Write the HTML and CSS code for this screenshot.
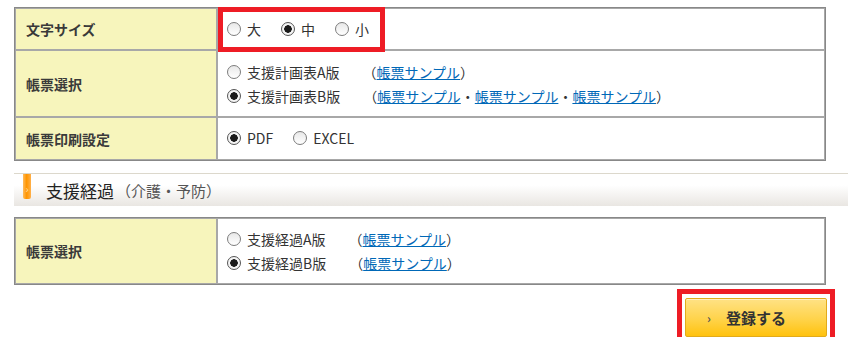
FILE: index.html
```html
<!DOCTYPE html>
<html lang="ja">
<head>
    <meta charset="UTF-8">
    <meta name="viewport" content="width=device-width, initial-scale=1.0">
    <title>帳票設定</title>
    <link rel="stylesheet" href="styles.css">
</head>
<body>
    <div class="page">
        <table class="form-table">
            <tr>
                <th>文字サイズ</th>
                <td class="hl-cell">
                    <div class="line">
                        <span class="opt"><i class="radio"></i>大</span>
                        <span class="opt"><i class="radio on"></i>中</span>
                        <span class="opt"><i class="radio"></i>小</span>
                    </div>
                    <span class="hl-frame"></span>
                </td>
            </tr>
            <tr>
                <th>帳票選択</th>
                <td class="multi">
                    <div class="line">
                        <span class="opt"><i class="radio"></i>支援計画表A版</span>
                        <span class="sample">（<a href="#">帳票サンプル</a>）</span>
                    </div>
                    <div class="line">
                        <span class="opt"><i class="radio on"></i>支援計画表B版</span>
                        <span class="sample">（<a href="#">帳票サンプル</a>・<a href="#">帳票サンプル</a>・<a href="#">帳票サンプル</a>）</span>
                    </div>
                </td>
            </tr>
            <tr>
                <th>帳票印刷設定</th>
                <td class="last">
                    <div class="line">
                        <span class="opt"><i class="radio on"></i>PDF</span>
                        <span class="opt"><i class="radio"></i>EXCEL</span>
                    </div>
                </td>
            </tr>
        </table>

        <div class="section-head">
            <span class="mark">›</span>
            <h2>支援経過</h2>
            <span class="sub">（介護・予防）</span>
        </div>

        <table class="form-table">
            <tr>
                <th>帳票選択</th>
                <td>
                    <div class="line">
                        <span class="opt"><i class="radio"></i>支援経過A版</span>
                        <span class="sample">（<a href="#">帳票サンプル</a>）</span>
                    </div>
                    <div class="line">
                        <span class="opt"><i class="radio on"></i>支援経過B版</span>
                        <span class="sample">（<a href="#">帳票サンプル</a>）</span>
                    </div>
                </td>
            </tr>
        </table>

        <div class="actions">
            <span class="btn-wrap">
                <button type="button" class="btn-submit"><span class="arrow">›</span>登録する</button>
            </span>
        </div>
    </div>
</body>
</html>
```

FILE: styles.css
```css
body {
    margin: 0;
    font-family: "Noto Sans CJK JP", "Liberation Sans", sans-serif;
    font-size: 14px;
    color: #333;
    background-color: #fff;
}
.page {
    padding: 7px 0 0 14px;
}
.form-table {
    width: 812px;
    border-collapse: separate;
    border-spacing: 0;
    border: 1px solid #888;
}
.form-table th,
.form-table td {
    border: 1px solid #a8a8a8;
}
.form-table th {
    width: 180px;
    padding: 0 10px;
    background-color: #f7f5bc;
    text-align: left;
    font-weight: bold;
    color: #3a3a3a;
}
.form-table td {
    padding: 8px 9px;
    line-height: 24px;
}
.form-table td.multi {
    padding-top: 9px;
}
.form-table td.last {
    padding-bottom: 9px;
}
.hl-cell {
    position: relative;
}
.hl-frame {
    position: absolute;
    left: 0;
    top: -2px;
    width: 167px;
    height: 45px;
    box-sizing: border-box;
    border: 5px solid #ee1c25;
}
.line {
    display: flex;
    align-items: center;
    gap: 20px;
}
.opt {
    display: inline-flex;
    align-items: center;
}
.radio {
    display: inline-block;
    width: 14px;
    height: 14px;
    box-sizing: border-box;
    border: 1px solid #7c7c7c;
    border-radius: 50%;
    background: linear-gradient(#e8e8e8, #fff);
    margin-right: 6px;
}
.radio.on {
    border-color: #555;
    background: radial-gradient(circle, #1a1a1a 0 3.5px, #f4f4f4 4px);
}
.line .sample {
    margin-left: 3px;
}
.sample a {
    color: #0068b7;
    text-decoration: underline;
}
.section-head {
    margin-top: 12px;
    height: 32px;
    border-top: 1px solid #dcd8cc;
    background: linear-gradient(#fff 35%, #e9e6e2);
    display: flex;
    align-items: center;
    padding-left: 9px;
}
.section-head + .form-table {
    margin-top: 11px;
}
.mark {
    align-self: flex-start;
    width: 8px;
    height: 25px;
    border-radius: 0 0 2px 2px;
    background: linear-gradient(90deg, #ffbb5c, #ff9500 45%, #ffb04a);
    color: #ffe0b0;
    font-size: 10px;
    line-height: 30px;
    text-align: center;
}
.section-head h2 {
    margin: 0 0 0 15px;
    font-size: 17px;
    font-weight: normal;
    color: #222;
}
.sub {
    margin-left: 2px;
    font-size: 15px;
    color: #555;
}
.actions {
    width: 813px;
    margin-top: 13px;
    display: flex;
    justify-content: flex-end;
}
.btn-wrap {
    position: relative;
    display: block;
}
.btn-wrap::before {
    content: "";
    position: absolute;
    top: -9px;
    bottom: -8px;
    left: -8px;
    right: -8px;
    border: 5px solid #ee1c25;
}
.btn-submit {
    display: flex;
    align-items: center;
    width: 142px;
    height: 39px;
    padding: 0 0 0 21px;
    border: 1px solid #e2aa1a;
    border-radius: 2px;
    background: linear-gradient(#ffe285, #ffd34a 55%, #ffc20e);
    box-shadow: inset 0 1px 0 #fff1bf;
    font-family: "Noto Sans CJK JP", sans-serif;
    font-size: 15px;
    font-weight: bold;
    color: #333;
    cursor: pointer;
}
.arrow {
    font-size: 12px;
    margin-right: 15px;
    color: #555;
}
```
